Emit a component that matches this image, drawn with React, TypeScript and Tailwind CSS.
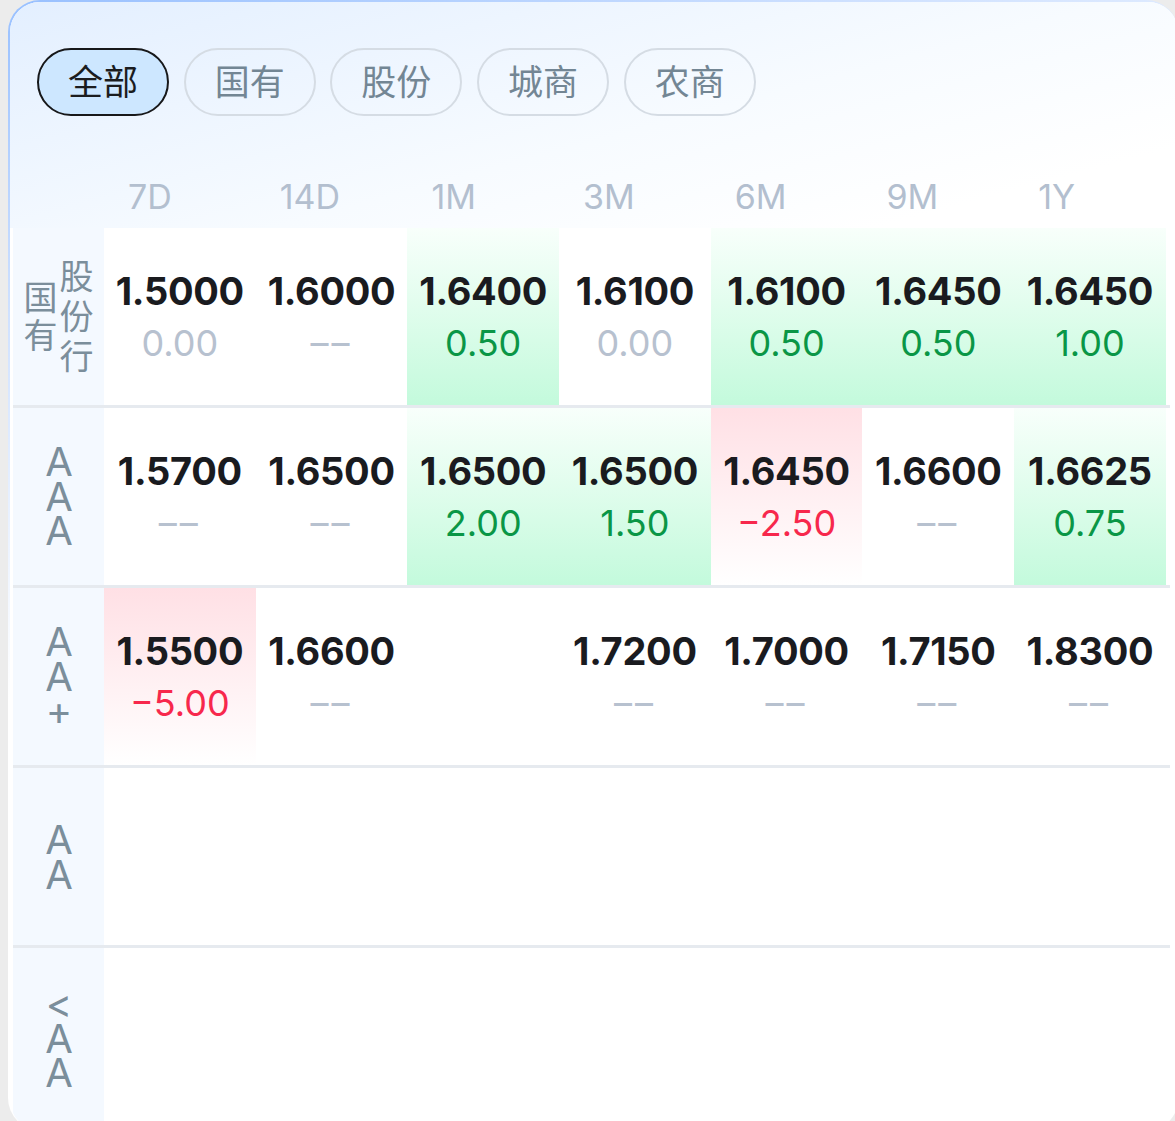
import React from "react";

type Cell = { v: string; d: string; t: "up" | "down" | "flat" | "none" } | null;

const tabs = ["全部", "国有", "股份", "城商", "农商"];
const tenors = ["7D", "14D", "1M", "3M", "6M", "9M", "1Y"];

const rows: { label: React.ReactNode; cells: Cell[] }[] = [
  {
    label: (
      <div className="flex items-center gap-[2px]">
        <div className="flex flex-col leading-[38px]">
          <span>国</span>
          <span>有</span>
        </div>
        <div className="flex flex-col leading-[40px]">
          <span>股</span>
          <span>份</span>
          <span>行</span>
        </div>
      </div>
    ),
    cells: [
      { v: "1.5000", d: "0.00", t: "flat" },
      { v: "1.6000", d: "––", t: "none" },
      { v: "1.6400", d: "0.50", t: "up" },
      { v: "1.6100", d: "0.00", t: "flat" },
      { v: "1.6100", d: "0.50", t: "up" },
      { v: "1.6450", d: "0.50", t: "up" },
      { v: "1.6450", d: "1.00", t: "up" },
    ],
  },
  {
    label: "AAA",
    cells: [
      { v: "1.5700", d: "––", t: "none" },
      { v: "1.6500", d: "––", t: "none" },
      { v: "1.6500", d: "2.00", t: "up" },
      { v: "1.6500", d: "1.50", t: "up" },
      { v: "1.6450", d: "−2.50", t: "down" },
      { v: "1.6600", d: "––", t: "none" },
      { v: "1.6625", d: "0.75", t: "up" },
    ],
  },
  {
    label: "AA+",
    cells: [
      { v: "1.5500", d: "−5.00", t: "down" },
      { v: "1.6600", d: "––", t: "none" },
      null,
      { v: "1.7200", d: "––", t: "none" },
      { v: "1.7000", d: "––", t: "none" },
      { v: "1.7150", d: "––", t: "none" },
      { v: "1.8300", d: "––", t: "none" },
    ],
  },
  { label: "AA", cells: [null, null, null, null, null, null, null] },
  { label: "<AA", cells: [null, null, null, null, null, null, null] },
];

// upright vertical text, so the letters stack as one line
const StackLabel = ({ text }: { text: string }) => (
  <span className="inline-block pb-[15px] text-[40px] leading-[40px] tracking-[-14.5px] [writing-mode:vertical-lr] [text-orientation:upright]">
    {text}
  </span>
);

const RateCell = ({ cell }: { cell: Cell }) => {
  if (!cell) return <div />;
  const bg =
    cell.t === "up"
      ? "bg-linear-to-b from-[#f8fffb] to-[#c3fadc]"
      : cell.t === "down"
      ? "bg-linear-to-b from-[#ffe0e5] to-white"
      : "";
  const sub =
    cell.t === "up"
      ? "text-[#0a9646]"
      : cell.t === "down"
      ? "text-[#f7284c]"
      : "text-[#b7c1cf]";
  return (
    <div className={`flex flex-col items-center justify-center ${bg}`}>
      <div className="text-[38px] leading-[52px] font-bold text-[#1a1b1f] tracking-[-0.3px]">
        {cell.v}
      </div>
      <div
        className={`text-[36px] leading-[52px] ${sub} ${
          cell.d === "––" ? "tracking-[3px]" : ""
        }`}
      >
        {cell.d}
      </div>
    </div>
  );
};

export default function App() {
  return (
    <div
      className="h-[1121px] w-full overflow-hidden bg-[#ececec]"
      style={{ fontFamily: "Inter, 'Noto Sans CJK SC', sans-serif" }}
    >
      <div className="ml-[8px] h-[1130px] w-[1170px] rounded-[32px] bg-[linear-gradient(160deg,#98c0ff_0%,#cfe1ff_20%,#ffffff_45%)] pl-[2px] pt-[2px]">
        <div className="h-full overflow-hidden rounded-[30px] bg-white">
          <div className="bg-[linear-gradient(165deg,#e3efff_0%,#f7fbff_55%,#ffffff_85%)]">
            <div className="flex gap-[14.7px] pl-[27px] pt-[46px]">
              {tabs.map((t, i) => (
                <div
                  key={t}
                  className={
                    i === 0
                      ? "flex h-[68px] w-[132px] items-center justify-center rounded-full border-[2.5px] border-[#17181a] bg-[#cde7ff] text-[35px] text-[#1b1c1e]"
                      : "flex h-[68px] w-[132px] items-center justify-center rounded-full border-2 border-[#d5dce4] text-[35px] text-[#738694]"
                  }
                >
                  {t}
                </div>
              ))}
            </div>
            <div className="ml-[3px] mt-[48px] grid h-[64px] w-[1157px] grid-cols-[91px_repeat(7,151.7px)_1fr]">
              <div />
              {tenors.map((t) => (
                <div
                  key={t}
                  className="flex items-center pl-6 text-[34px] text-[#b3bfcf]"
                >
                  {t}
                </div>
              ))}
              <div />
            </div>
          </div>

          <div className="ml-[3px] w-[1157px]">
            {rows.map((r, i) => (
              <div
                key={i}
                className={`grid h-[180px] grid-cols-[91px_repeat(7,151.7px)_1fr] ${
                  i < rows.length - 1 ? "border-b-[3px] border-[#e6eaef]" : ""
                }`}
              >
                <div className="flex items-center justify-center bg-[#f4f9ff] text-[34px] text-[#7b8e9b]">
                  {typeof r.label === "string" ? (
                    <StackLabel text={r.label} />
                  ) : (
                    r.label
                  )}
                </div>
                {r.cells.map((c, j) => (
                  <RateCell key={j} cell={c} />
                ))}
                <div />
              </div>
            ))}
            <div className="h-[40px] w-[91px] bg-[#f4f9ff]" />
          </div>
        </div>
      </div>
    </div>
  );
}
